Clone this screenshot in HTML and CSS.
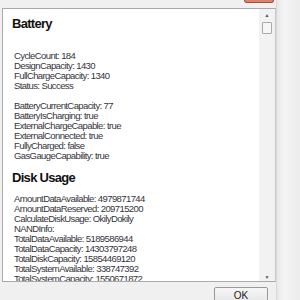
FILE: index.html
```html
<!doctype html>
<html lang="en">
<head>
  <meta charset="UTF-8" />
  <title>Device Info</title>
  <link rel="stylesheet" href="styles.css">
</head>
<body>
<div class="window">
  <div class="titlebar">
    <div class="close-btn"></div>
  </div>
  <div class="panel">
    <div class="content">
      <h2>Battery</h2>
      <div class="group first">
        <div>CycleCount: 184</div>
        <div>DesignCapacity: 1430</div>
        <div>FullChargeCapacity: 1340</div>
        <div>Status: Success</div>
      </div>
      <div class="group">
        <div>BatteryCurrentCapacity: 77</div>
        <div>BatteryIsCharging: true</div>
        <div>ExternalChargeCapable: true</div>
        <div>ExternalConnected: true</div>
        <div>FullyCharged: false</div>
        <div>GasGaugeCapability: true</div>
      </div>
      <h2>Disk Usage</h2>
      <div class="group">
        <div>AmountDataAvailable: 4979871744</div>
        <div>AmountDataReserved: 209715200</div>
        <div>CalculateDiskUsage: OkilyDokily</div>
        <div>NANDInfo:</div>
        <div>TotalDataAvailable: 5189586944</div>
        <div>TotalDataCapacity: 14303797248</div>
        <div>TotalDiskCapacity: 15854469120</div>
        <div>TotalSystemAvailable: 338747392</div>
        <div>TotalSystemCapacity: 1550671872</div>
      </div>
    </div>
    <div class="scrollbar">
      <div class="arrow">&#9650;</div>
      <div class="thumb"></div>
      <div class="track"></div>
      <div class="arrow">&#9660;</div>
    </div>
  </div>
  <div class="footer">
    <button class="ok-btn">OK</button>
  </div>
</div>
<div class="edge"></div>
</body>
</html>
```

FILE: styles.css
```css
html, body {
  margin: 0;
  padding: 0;
}
body {
  width: 300px;
  height: 300px;
  overflow: hidden;
  display: flex;
  background-color: #f0f0f0;
  font-family: "Liberation Sans", Arial, sans-serif;
}
.window {
  width: 276px;
  display: flex;
  flex-direction: column;
}
.titlebar {
  flex-shrink: 0;
  height: 8px;
  display: flex;
  justify-content: flex-end;
  padding-right: 2px;
}
.close-btn {
  width: 28px;
  height: 2px;
  background-color: #d9826e;
  border: 1px solid #a05040;
  border-top: none;
  border-radius: 0 0 3px 3px;
}
.panel {
  flex-shrink: 0;
  margin-left: 2px;
  height: 272px;
  display: flex;
  background-color: #fff;
  border: 1px solid #aaa;
  border-right-color: #c8c8c8;
}
.content {
  flex: 1;
  overflow: hidden;
  padding: 7px 0 0 9px;
  color: #34343c;
  font-size: 9.5px;
  line-height: 10px;
  letter-spacing: -0.6px;
}
.content h2 {
  margin: 0;
  font-size: 13px;
  line-height: 16px;
  color: #111;
  letter-spacing: -0.7px;
}
.group {
  margin-top: 10px;
  padding-left: 2px;
}
.group.first {
  margin-top: 19px;
}
.group + h2 {
  margin-top: 9px;
}
h2 + .group {
  margin-top: 8px;
}
h2 + .group.first {
  margin-top: 19px;
}
.scrollbar {
  width: 16px;
  display: flex;
  flex-direction: column;
  align-items: center;
  background-color: #f2f2f2;
}
.arrow {
  height: 10px;
  font-size: 5px;
  line-height: 12px;
  color: #555;
}
.thumb {
  width: 8px;
  height: 10px;
  margin-top: 3px;
  background-color: #f6f6f6;
  border: 1px solid #aaa;
  border-radius: 1px;
}
.track {
  flex: 1;
}
.footer {
  flex-shrink: 0;
  display: flex;
  justify-content: flex-end;
  padding: 5px 8px 0 0;
}
.ok-btn {
  width: 54px;
  height: 22px;
  padding: 0 0 6px;
  font-family: "Liberation Sans", Arial, sans-serif;
  font-size: 10px;
  color: #222;
  background: linear-gradient(#f6f6f6, #e0e0e0);
  border: 1px solid #999;
  border-radius: 2px;
}
.edge {
  flex: 1;
  border-left: 1px solid #d8d8d8;
  background: linear-gradient(to right, #e8e8e8, #f4f4f4 30%, #ececec);
}
```
